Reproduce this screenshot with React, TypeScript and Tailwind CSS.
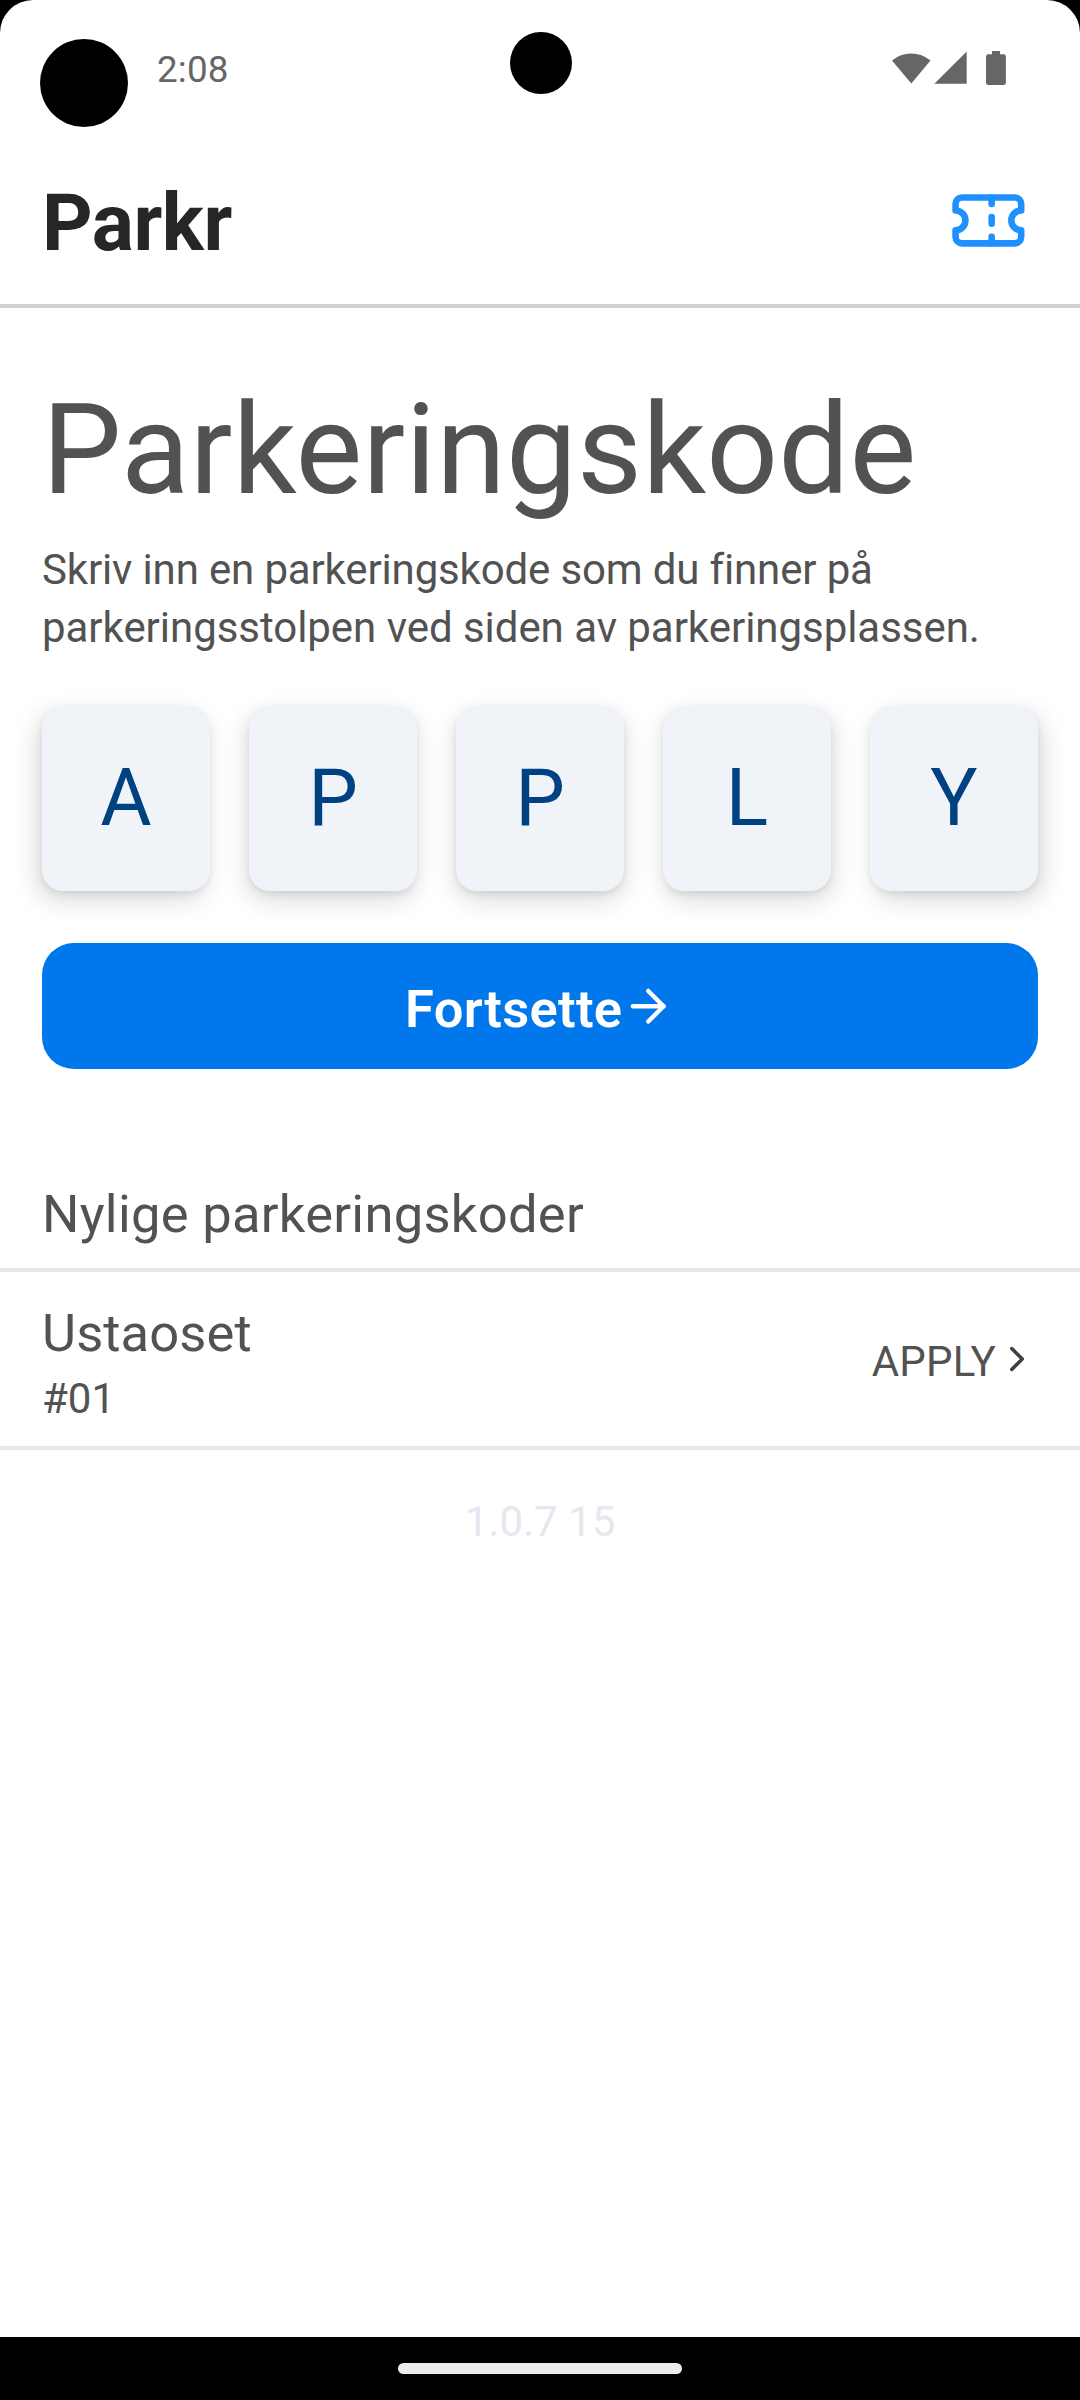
import React from "react";
import { ArrowRight, ChevronRight, Ticket } from "lucide-react";

// the shadow leans away from the middle of the screen
const codeCells = [
  { letter: "A", shadow: "shadow-[-5px_9px_26px_rgba(0,0,0,0.15),0_3px_7px_rgba(0,0,0,0.08)]" },
  { letter: "P", shadow: "shadow-[-2px_9px_26px_rgba(0,0,0,0.15),0_3px_7px_rgba(0,0,0,0.08)]" },
  { letter: "P", shadow: "shadow-[0px_9px_26px_rgba(0,0,0,0.15),0_3px_7px_rgba(0,0,0,0.08)]" },
  { letter: "L", shadow: "shadow-[2px_9px_26px_rgba(0,0,0,0.15),0_3px_7px_rgba(0,0,0,0.08)]" },
  { letter: "Y", shadow: "shadow-[5px_9px_26px_rgba(0,0,0,0.15),0_3px_7px_rgba(0,0,0,0.08)]" },
];

const recentCodes = [{ place: "Ustaoset", spot: "#01", code: "APPLY" }];

const StatusBar: React.FC = () => {
  return (
    <div className="relative flex h-[136px] items-start justify-between pl-10 pr-[74px] pt-[39px]">
      <div className="flex">
        <div className="h-[88px] w-[88px] rounded-full bg-black" />
        <span className="ml-[29px] mt-[9px] text-[36.75px] leading-[44px] tracking-[0.2px] text-[#666666]">
          2:08
        </span>
      </div>
      <svg className="mt-[12px] h-[34px] w-[114px]" viewBox="0 0 114 34" fill="#666666">
        <path d="M0 9.5A30 30 0 0 1 38.5 9.5L19.3 32.5Z" />
        <path d="M42.3 32.7H74.7V0.5Z" />
        <path d="M100 0h8v3.3h3.5a2.4 2.4 0 0 1 2.4 2.4v26a2.4 2.4 0 0 1-2.4 2.3H96.4a2.4 2.4 0 0 1-2.4-2.3v-26a2.4 2.4 0 0 1 2.4-2.4H100Z" />
      </svg>
      <div className="absolute left-[509.5px] top-[31.5px] h-[62px] w-[62px] rounded-full bg-black" />
    </div>
  );
};

const Header: React.FC = () => {
  return (
    <header className="flex h-[172px] items-center justify-between border-b-4 border-[#d0d0d0] pl-[42px] pr-[52px]">
      <h1 className="pt-[6px] text-[78.75px] font-bold leading-[92px] tracking-[-0.5px] text-neutral-800">
        Parkr
      </h1>
      <Ticket size={78.75} strokeWidth={2} className="text-[#1e90ff]" />
    </header>
  );
};

const App: React.FC = () => {
  return (
    <div className="bg-black font-['Roboto',sans-serif] text-neutral-600">
      <div className="flex h-[2337px] flex-col overflow-hidden rounded-t-[33px] bg-white">
        <StatusBar />
        <Header />

        <main>
          <section className="px-[42px] pt-[68px]">
            <h2 className="text-[126px] leading-[148px] tracking-[0.2px]">Parkeringskode</h2>
            <p className="mt-[17px] text-[42px] leading-[58px]">
              <span className="tracking-[-0.15px]">
                Skriv inn en parkeringskode som du finner på
              </span>{" "}
              <span className="tracking-[-0.04px]">
                parkeringsstolpen ved siden av parkeringsplassen.
              </span>
            </p>

            <div className="mt-[49px] flex justify-between">
              {codeCells.map(({ letter, shadow }, index) => (
                <div
                  key={index}
                  className={`flex h-[185px] w-[168px] items-center justify-center rounded-[21px] bg-[#f0f4f9] text-[78.75px] leading-none text-[#004182] ${shadow}`}
                >
                  {letter}
                </div>
              ))}
            </div>

            <button className="mt-[52px] flex h-[126px] w-full items-center justify-center rounded-[32px] bg-[#0077ea] text-white">
              <span className="pt-[5px] text-[52.5px] font-semibold leading-[62px] tracking-[0.3px]">
                Fortsette
              </span>
              <ArrowRight size={52.5} strokeWidth={2} />
            </button>
          </section>

          <section className="pt-[112px]">
            <h3 className="border-b-4 border-[#e8e8e8] px-[42px] pb-[21px] text-[52.5px] leading-[66px] tracking-[0.28px]">
              Nylige parkeringskoder
            </h3>
            {recentCodes.map(({ place, spot, code }) => (
              <div
                key={code}
                className="flex h-[178px] items-center justify-between border-b-4 border-[#e8e8e8] px-[42px]"
              >
                <div className="pt-[12px]">
                  <div className="text-[52.5px] leading-[66px] tracking-[0.1px]">{place}</div>
                  <div className="mt-[2px] text-[42px] leading-[62px]">{spot}</div>
                </div>
                <div className="flex items-center">
                  <span className="pt-[5px] text-[42px] leading-[58px] tracking-[0.2px]">
                    {code}
                  </span>
                  <ChevronRight size={42} strokeWidth={2} className="text-neutral-700" />
                </div>
              </div>
            ))}
          </section>

          <p className="pt-[43px] text-center text-[42px] leading-[58px] text-[#e4e8ef]">
            1.0.7 15
          </p>
        </main>
      </div>

      <div className="flex h-[63px] justify-center pt-[26px]">
        <div className="h-[11px] w-[284px] rounded-full bg-[#ececec]" />
      </div>
    </div>
  );
};

export default App;
